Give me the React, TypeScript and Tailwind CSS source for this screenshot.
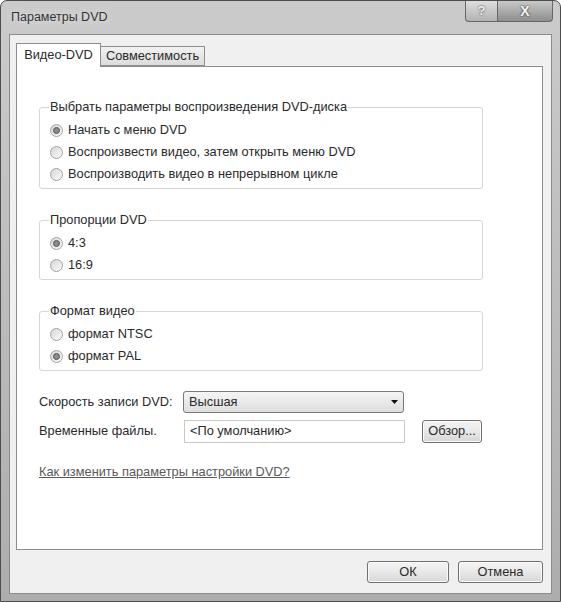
import React from "react";

const ui = "font-['Liberation_Sans',Arial,sans-serif]";

function Radio({ checked, label }: { checked?: boolean; label: string }) {
  return (
    <div className="flex h-[22px] items-center gap-[5px]">
      <span className="flex h-[13px] w-[13px] items-center justify-center rounded-full border border-[#a3a3a3] bg-gradient-to-br from-[#d6d6d6] to-[#fbfbfb]">
        {checked && <span className="h-[7px] w-[7px] rounded-full border border-[#555] bg-[#8a8a8a]" />}
      </span>
      <span>{label}</span>
    </div>
  );
}

function Group({ title, children }: { title: string; children: React.ReactNode }) {
  return (
    <fieldset className="w-[444px] rounded-[3px] border border-[#d6d6d6] px-[10px] pb-[3px] pt-[4px]">
      <legend className="ml-[-1px] px-[1px] leading-[16px]">{title}</legend>
      {children}
    </fieldset>
  );
}

function Button({ children, className }: { children: React.ReactNode; className?: string }) {
  return (
    <div
      className={
        "flex items-center justify-center rounded-[3px] border border-[#707070] bg-gradient-to-b from-[#f4f4f4] via-[#e8e8e8] to-[#d6d6d6] shadow-[inset_0_0_0_1px_#fbfbfb] " +
        (className ?? "")
      }
    >
      {children}
    </div>
  );
}

export default function App() {
  return (
    <div className={"h-[602px] w-[561px] bg-white text-[12.8px] text-[#2a2a2a] " + ui}>
      <div className="flex h-full w-full flex-col rounded-t-[7px] border border-[#4d4d4d] bg-gradient-to-b from-[#cbcbcb] via-[#bcbcbc] to-[#adadad] px-[8px] pb-[7px]">
        {/* title bar */}
        <div className="flex h-[33px] items-start">
          <div className="self-center pl-[2px] text-[12.5px] text-[#333] [text-shadow:0_0_6px_#ececec]">Параметры DVD</div>
          <div className="ml-auto mr-[-1px] flex">
            <div className="flex h-[21px] w-[33px] items-center justify-center rounded-bl-[4px] border border-t-0 border-[#666] bg-gradient-to-b from-[#dedede] to-[#b3b3b3] text-[13px] font-bold text-[#f4f4f4] [text-shadow:0_0_2px_#222]">
              ?
            </div>
            <div className="flex h-[21px] w-[55px] items-center justify-center rounded-br-[4px] border border-l-0 border-t-0 border-[#666] bg-gradient-to-b from-[#c8c8c8] to-[#8e8e8e] text-[14px] font-bold text-[#f6f6f6] [text-shadow:0_0_2px_#111]">
              X
            </div>
          </div>
        </div>

        {/* client area */}
        <div className="flex flex-1 flex-col border border-[#8c8c8c] bg-[#f0f0f0] pl-[6px] pr-[8px] pt-[8px]">
          <div className="flex items-end">
            <div className="relative z-10 mb-[-1px] flex h-[24px] w-[85px] items-center justify-center border border-b-0 border-[#8e8e8e] bg-white pb-[2px]">
              Видео-DVD
            </div>
            <div className="flex h-[20px] w-[104px] items-center justify-center border border-l-0 border-[#8e8e8e] bg-gradient-to-b from-[#f2f2f2] to-[#dcdcdc]">
              Совместимость
            </div>
          </div>

          <div className="flex h-[484px] flex-col border border-[#8e8e8e] bg-white pl-[22px] pt-[32px]">
            <Group title="Выбрать параметры воспроизведения DVD-диска">
              <Radio checked label="Начать с меню DVD" />
              <Radio label="Воспроизвести видео, затем открыть меню DVD" />
              <Radio label="Воспроизводить видео в непрерывном цикле" />
            </Group>
            <div className="mt-[23px]">
              <Group title="Пропорции DVD">
                <Radio checked label="4:3" />
                <Radio label="16:9" />
              </Group>
            </div>
            <div className="mt-[23px]">
              <Group title="Формат видео">
                <Radio label="формат NTSC" />
                <Radio checked label="формат PAL" />
              </Group>
            </div>

            <div className="mt-[20px] flex h-[22px] items-center">
              <span className="w-[144px]">Скорость записи DVD:</span>
              <div className="flex h-[22px] w-[221px] items-center justify-between rounded-[3px] border border-[#7a7a7a] bg-gradient-to-b from-[#f5f5f5] to-[#dedede] pl-[5px] pr-[5px]">
                <span>Высшая</span>
                <svg width="7" height="4" viewBox="0 0 7 4">
                  <path d="M0 0h7L3.5 4z" fill="#111" />
                </svg>
              </div>
            </div>
            <div className="mt-[6px] flex h-[24px] items-center">
              <span className="w-[145px]">Временные файлы.</span>
              <div className="flex h-[23px] w-[221px] items-center border border-[#c9c9c9] bg-white pl-[5px]">
                &lt;По умолчанию&gt;
              </div>
              <Button className="ml-[17px] h-[23px] w-[60px]">Обзор...</Button>
            </div>

            <div className="mt-[21px] leading-[16px] text-[#5a5a5a] underline">
              Как изменить параметры настройки DVD?
            </div>
          </div>

          <div className="flex justify-end gap-[9px] pb-[10px] pt-[11px]">
            <Button className="h-[22px] w-[82px]">ОК</Button>
            <Button className="h-[22px] w-[85px]">Отмена</Button>
          </div>
        </div>
      </div>
    </div>
  );
}
